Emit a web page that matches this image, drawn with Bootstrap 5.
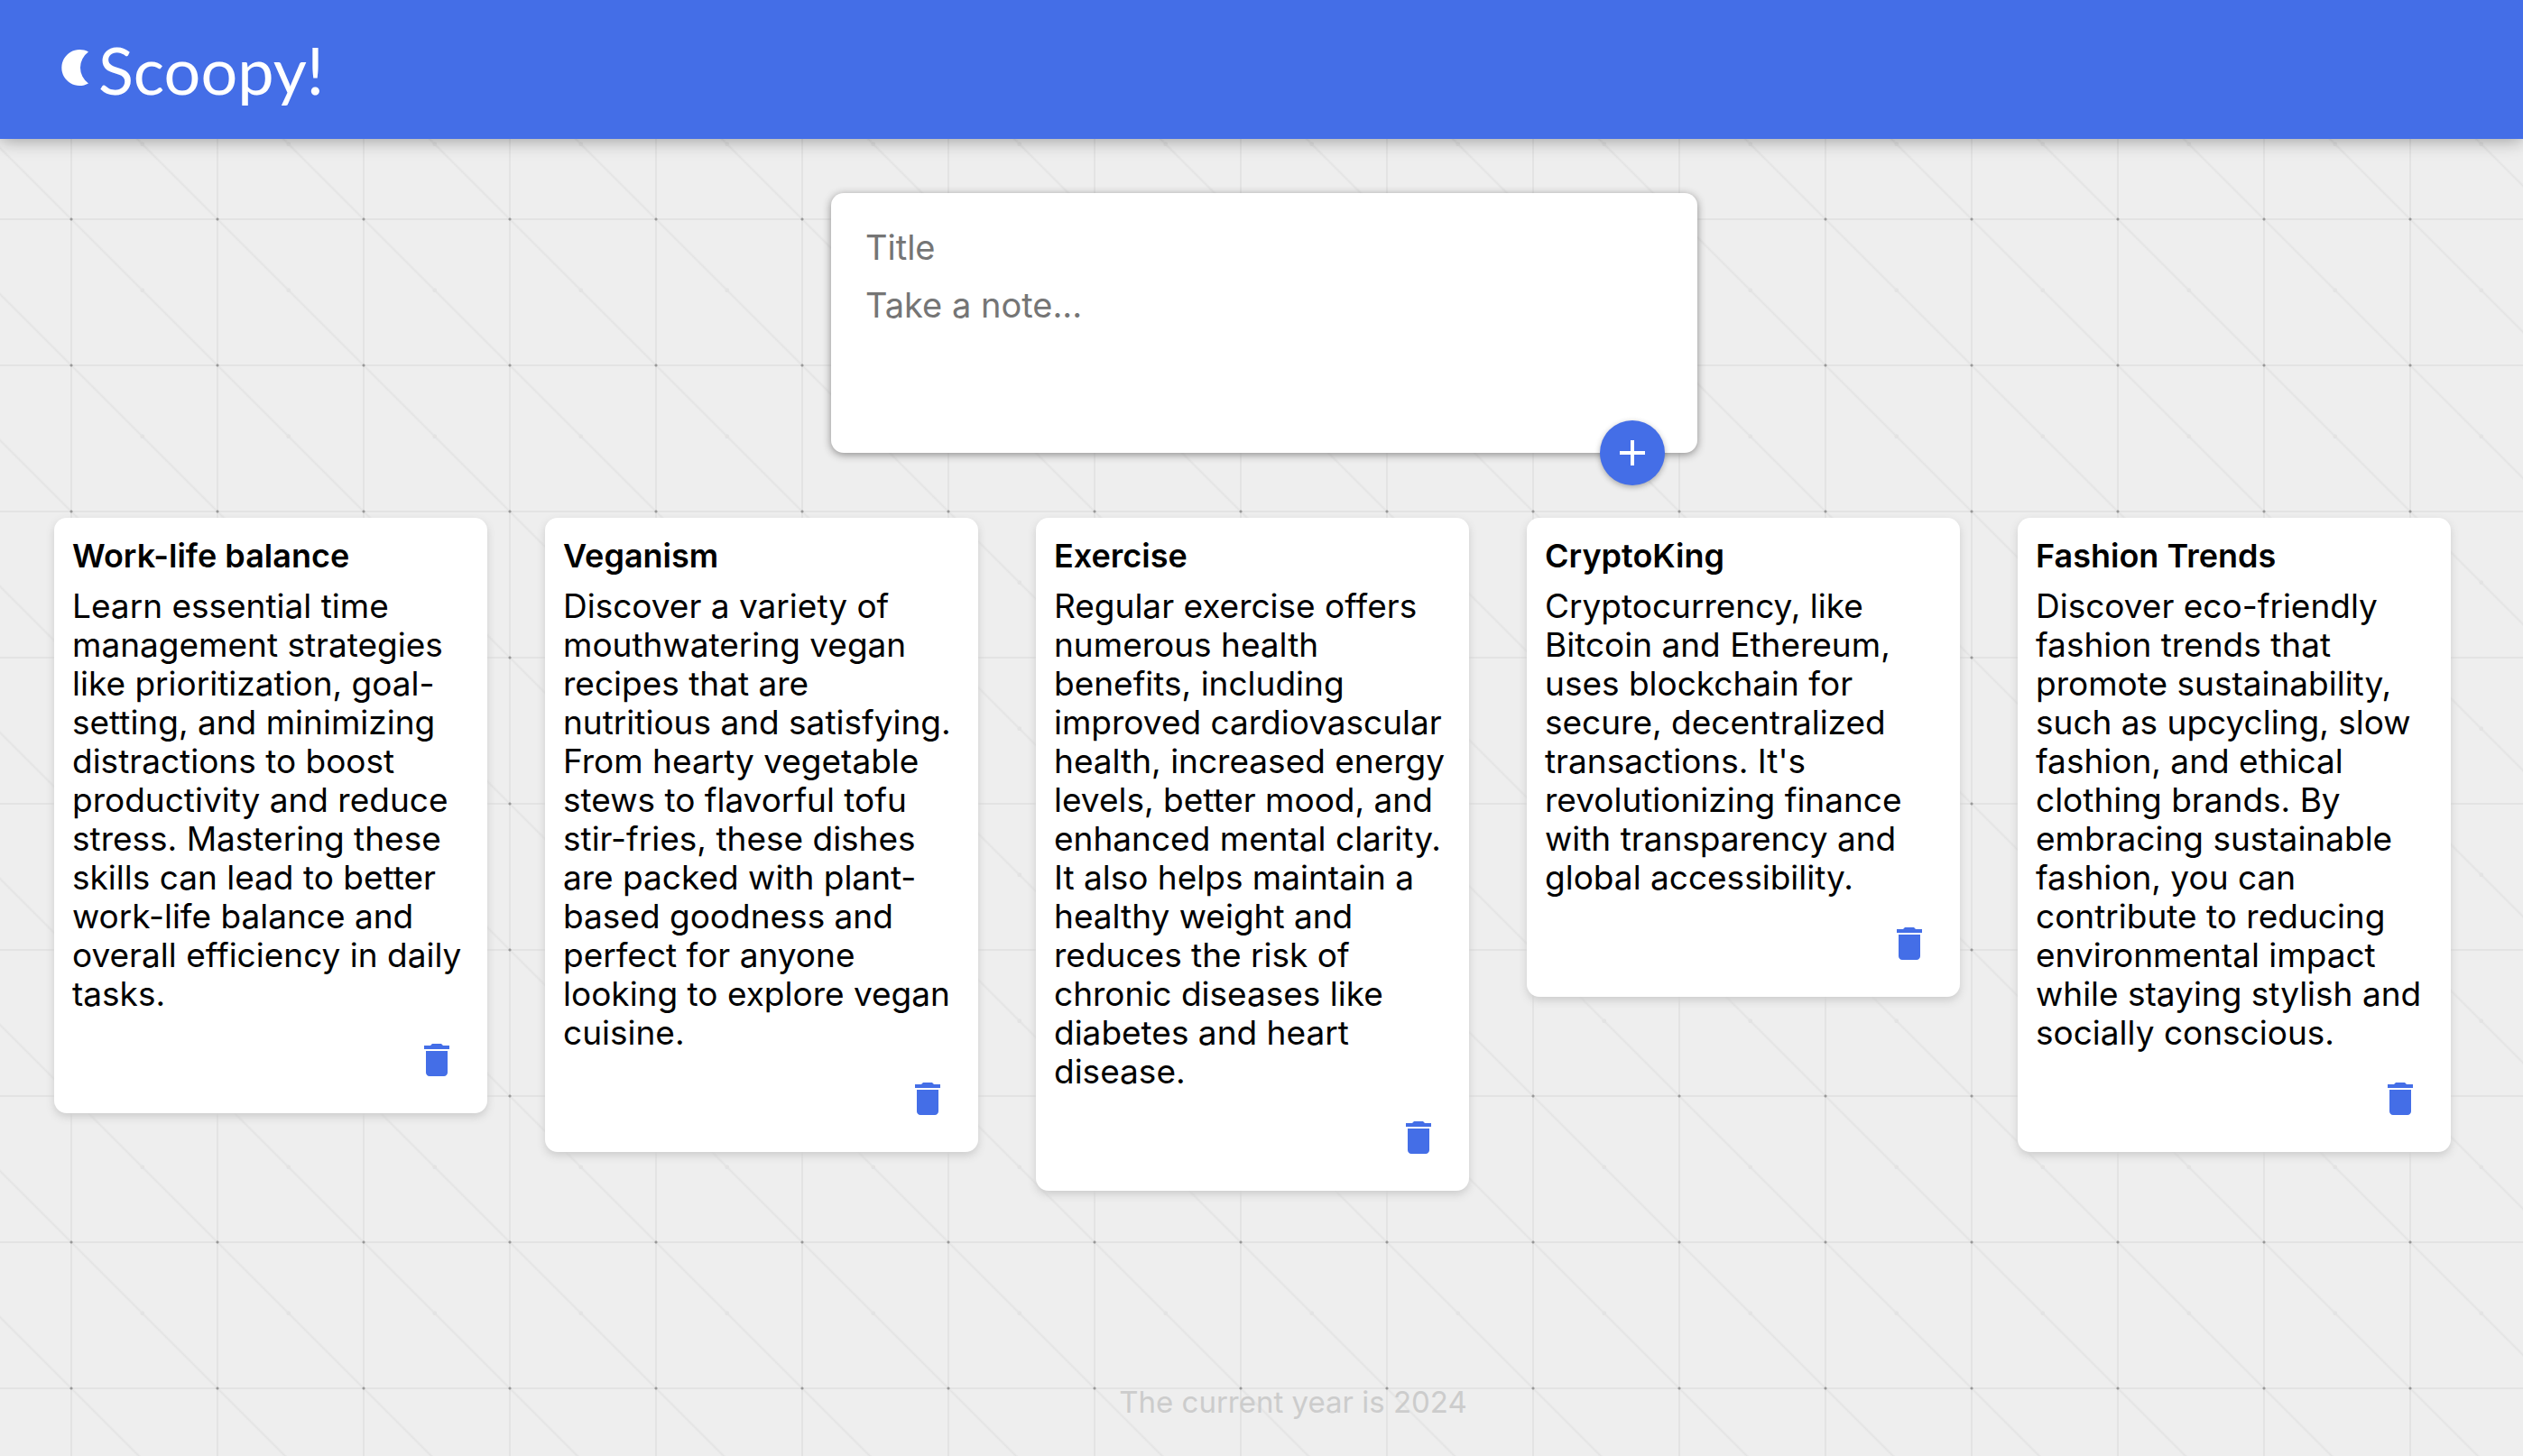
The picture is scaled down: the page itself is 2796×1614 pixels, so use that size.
<!DOCTYPE html>
<html lang="en">
<head>
<meta charset="utf-8">
<meta name="viewport" content="width=device-width, initial-scale=1">
<title>Scoopy!</title>
<link rel="stylesheet" href="https://cdn.jsdelivr.net/npm/bootstrap@5.3.0/dist/css/bootstrap.min.css">
<style>
  :root { --brand: #446ee7; --rule: #e3e3e3; }
  body {
    font-family: Inter, "Open Sans", sans-serif;
    color: #000;
    background-color: #eee;
    background-image:
      radial-gradient(circle at 81px 81px, #999 1px, transparent 2px),
      radial-gradient(circle at 160px 160px, var(--rule) 2px, transparent 3px),
      linear-gradient(to right, var(--rule) 2px, transparent 2px),
      linear-gradient(to bottom, var(--rule) 2px, transparent 2px),
      linear-gradient(45deg, transparent calc(50% - 2px), #e4e4e4 50%, transparent calc(50% + 2px));
    background-size: 162px 162px;
    background-position: -2px 0, -2px 0, 78px 0, 0 80px, 79px 81px;
  }
  .topbar { height: 154px; padding: 0 68px; background: var(--brand); box-shadow: 0 0 20px rgba(0,0,0,.4); }
  .brand-name { font-family: Lato, sans-serif; font-size: 72px; line-height: 84px; color: #fff; }
  .moon { width: 30px; height: 40px; margin: 0 11px 4px 0; }
  .composer-wrap { padding: 60px 0 0 6px; }
  .composer { width: 960px; height: 288px; padding: 36px 38px; border-radius: 14px; box-shadow: 0 2px 10px #8a8989; }
  .composer .form-control { font-size: 38px; line-height: 48px; color: #000; resize: none; }
  .composer .form-control::placeholder { color: #757575; }
  .add-btn { right: 36px; bottom: -36px; width: 72px; height: 72px; background: var(--brand); box-shadow: 0 2px 6px rgba(0,0,0,.3); }
  .notes { padding: 0 60px; margin-top: 72px; gap: 64px; }
  .note { width: 480px; padding: 20px 20px 35px; border-radius: 14px; box-shadow: 0 4px 10px #ccc; }
  .note h2 { font-size: 36px; line-height: 44px; font-weight: 600; margin-bottom: 12px; }
  .note p { font-size: 37px; line-height: 43px; margin-bottom: 28px; white-space: nowrap; }
  .trash { color: var(--brand); margin-right: 12px; }
  .icon-lg { width: 48px; height: 48px; display: block; }
  .foot { padding: 0 0 40px 70px; font-size: 33px; line-height: 40px; color: #ccc; }
</style>
</head>
<body class="d-flex flex-column min-vh-100">
<svg class="d-none" aria-hidden="true">
  <symbol id="bin" viewBox="0 0 24 24"><path fill="currentColor" d="M6 19c0 1.1.9 2 2 2h8c1.1 0 2-.9 2-2V7H6v12zM19 4h-3.500l-1-1h-5l-1 1H5v2h14V4z"/></symbol>
</svg>
<header class="topbar d-flex align-items-center">
  <a href="#" class="d-flex align-items-center text-decoration-none">
    <svg class="moon" viewBox="0 0 30 40" aria-hidden="true"><path fill="#fff" d="M30 2.500A20 20 0 1 0 30 37.500A21.500 21.500 0 0 1 30 2.500z"/></svg>
    <span class="brand-name">Scoopy!</span>
  </a>
</header>
<main>
  <div class="composer-wrap">
    <form class="composer card border-0 mx-auto">
      <input class="form-control border-0 p-0" type="text" placeholder="Title" aria-label="Title">
      <textarea class="form-control border-0 p-0 mt-3" rows="3" placeholder="Take a note..." aria-label="Take a note"></textarea>
      <button type="button" class="add-btn btn border-0 rounded-circle p-0 position-absolute d-flex align-items-center justify-content-center text-white" aria-label="Add note">
        <svg class="icon-lg" viewBox="0 0 24 24"><path fill="currentColor" d="M19 13h-6v6h-2v-6H5v-2h6V5h2v6h6v2z"/></svg>
      </button>
    </form>
  </div>
  <section class="notes d-flex flex-wrap align-items-start">
    <article class="note card border-0">
      <h2>Work-life balance</h2>
      <p>Learn essential time<br>management strategies<br>like prioritization, goal-<br>setting, and minimizing<br>distractions to boost<br>productivity and reduce<br>stress. Mastering these<br>skills can lead to better<br>work-life balance and<br>overall efficiency in daily<br>tasks.</p>
      <button type="button" class="trash btn border-0 p-0 align-self-end" aria-label="Delete note"><svg class="icon-lg"><use href="#bin"/></svg></button>
    </article>
    <article class="note card border-0">
      <h2>Veganism</h2>
      <p>Discover a variety of<br>mouthwatering vegan<br>recipes that are<br>nutritious and satisfying.<br>From hearty vegetable<br>stews to flavorful tofu<br>stir-fries, these dishes<br>are packed with plant-<br>based goodness and<br>perfect for anyone<br>looking to explore vegan<br>cuisine.</p>
      <button type="button" class="trash btn border-0 p-0 align-self-end" aria-label="Delete note"><svg class="icon-lg"><use href="#bin"/></svg></button>
    </article>
    <article class="note card border-0">
      <h2>Exercise</h2>
      <p>Regular exercise offers<br>numerous health<br>benefits, including<br>improved cardiovascular<br>health, increased energy<br>levels, better mood, and<br>enhanced mental clarity.<br>It also helps maintain a<br>healthy weight and<br>reduces the risk of<br>chronic diseases like<br>diabetes and heart<br>disease.</p>
      <button type="button" class="trash btn border-0 p-0 align-self-end" aria-label="Delete note"><svg class="icon-lg"><use href="#bin"/></svg></button>
    </article>
    <article class="note card border-0">
      <h2>CryptoKing</h2>
      <p>Cryptocurrency, like<br>Bitcoin and Ethereum,<br>uses blockchain for<br>secure, decentralized<br>transactions. It's<br>revolutionizing finance<br>with transparency and<br>global accessibility.</p>
      <button type="button" class="trash btn border-0 p-0 align-self-end" aria-label="Delete note"><svg class="icon-lg"><use href="#bin"/></svg></button>
    </article>
    <article class="note card border-0">
      <h2>Fashion Trends</h2>
      <p>Discover eco-friendly<br>fashion trends that<br>promote sustainability,<br>such as upcycling, slow<br>fashion, and ethical<br>clothing brands. By<br>embracing sustainable<br>fashion, you can<br>contribute to reducing<br>environmental impact<br>while staying stylish and<br>socially conscious.</p>
      <button type="button" class="trash btn border-0 p-0 align-self-end" aria-label="Delete note"><svg class="icon-lg"><use href="#bin"/></svg></button>
    </article>
  </section>
</main>
<footer class="foot mt-auto text-center">The current year is 2024</footer>
<script src="https://cdn.jsdelivr.net/npm/bootstrap@5.3.0/dist/js/bootstrap.bundle.min.js"></script>
</body>
</html>
